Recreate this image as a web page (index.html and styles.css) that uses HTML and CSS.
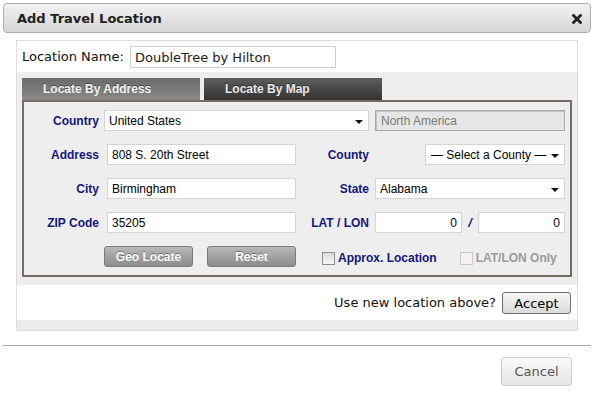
FILE: index.html
```html
<!DOCTYPE html>
<html>
<head>
<meta charset="utf-8">
<link rel="stylesheet" href="styles.css">
</head>
<body>
<div class="dialog">
  <div class="titlebar">
    <span class="title">Add Travel Location</span>
    <svg class="close" width="10" height="10" viewBox="0 0 10 10"><path d="M1.5 1.5 L8.5 8.5 M8.5 1.5 L1.5 8.5" stroke="#222" stroke-width="2.8" stroke-linecap="square"/></svg>
  </div>
  <div class="content">
    <div class="panel">
      <div class="name-row">
        <span class="name-label">Location Name:</span>
        <input class="name-input" type="text" value="DoubleTree by Hilton">
      </div>
      <div class="gray">
        <div class="tabs">
          <div class="tab active">Locate By Address</div>
          <div class="tab">Locate By Map</div>
        </div>
        <div class="tabbox">
          <div class="grid">
            <span class="lbl">Country</span>
            <div class="select country-select"><span>United States</span><i class="arrow"></i></div>
            <input class="field region" type="text" value="North America" disabled>

            <span class="lbl">Address</span>
            <input class="field text-in" type="text" value="808 S. 20th Street">
            <span class="lbl lbl2">County</span>
            <div class="county-cell"><div class="select county-select"><span>— Select a County —</span><i class="arrow"></i></div></div>

            <span class="lbl">City</span>
            <input class="field text-in" type="text" value="Birmingham">
            <span class="lbl lbl2">State</span>
            <div class="select state-select"><span>Alabama</span><i class="arrow"></i></div>

            <span class="lbl">ZIP Code</span>
            <input class="field text-in" type="text" value="35205">
            <span class="lbl lbl2">LAT / LON</span>
            <div class="latlon">
              <input class="field num" type="text" value="0">
              <span class="slash">/</span>
              <input class="field num lon" type="text" value="0">
            </div>

            <span></span>
            <div class="btns">
              <button class="gbtn">Geo Locate</button>
              <button class="gbtn reset">Reset</button>
            </div>
            <div class="checks">
              <label class="chk"><span class="box"></span>Approx. Location</label>
              <label class="chk disabled"><span class="box"></span>LAT/LON Only</label>
            </div>
          </div>
        </div>
      </div>
      <div class="accept-row">
        <span class="question">Use new location above?</span>
        <button class="accept">Accept</button>
      </div>
      <div class="band"></div>
    </div>
  </div>
  <div class="footer">
    <button class="cancel">Cancel</button>
  </div>
</div>
</body>
</html>
```

FILE: styles.css
```css
* { box-sizing: border-box; }
html, body { margin: 0; padding: 0; background: #fff; }
body { width: 594px; height: 403px; overflow: hidden; font-family: "Liberation Sans", Arial, sans-serif; }

.dialog { padding: 3px; }

.titlebar {
  height: 30px;
  border: 1px solid #adadad;
  border-radius: 4px;
  background: linear-gradient(#f2f2f2, #d6d6d6);
  display: flex;
  align-items: center;
  justify-content: space-between;
  padding: 0 8px 0 13px;
}
.title {
  font-family: "DejaVu Sans", Verdana, sans-serif;
  font-weight: bold;
  font-size: 13px;
  color: #222;
}
.close { display: block; margin-top: 1px; }

.content { padding: 7px 13px 0 13px; }

.panel {
  border: 1px solid #dcdcdc;
  background: #fff;
}

.name-row {
  height: 31px;
  display: flex;
  align-items: flex-start;
  padding: 5px 0 0 5px;
}
.name-label {
  font-family: "DejaVu Sans", Verdana, sans-serif;
  font-size: 13px;
  color: #111;
  line-height: 22px;
  width: 108px;
}
.name-input {
  width: 206px;
  height: 22px;
  border: 1px solid #cfcfcf;
  font-family: "DejaVu Sans", Verdana, sans-serif;
  font-size: 13px;
  color: #222;
  padding: 0 4px;
  margin: 0;
  outline: none;
}

.gray {
  background: #eeeeee;
  padding: 6px 5px 8px 5px;
}

.tabs { display: flex; gap: 4px; height: 22px; }
.tab {
  width: 178px;
  height: 22px;
  padding-left: 21px;
  font-weight: bold;
  font-size: 12px;
  line-height: 22px;
  color: #e8e8e8;
  background: linear-gradient(#5e5e5e, #333);
  text-shadow: 0 -1px 0 rgba(0,0,0,0.4);
}
.tab.active {
  background: linear-gradient(#6a6a6a, #8a8a8a);
  color: #f4f4f4;
}

.tabbox {
  border: 2px solid #766c62;
  background: #eeeeee;
  padding: 8px 0 8px 0;
}

.grid {
  display: grid;
  grid-template-columns: 80px 192px 79px 190px;
  grid-auto-rows: 21px;
  row-gap: 13px;
  align-items: center;
}

.lbl {
  font-weight: bold;
  font-size: 12px;
  color: #16167e;
  text-align: right;
  padding-right: 5px;
}
.lbl2 { padding-right: 6px; }

.field {
  height: 21px;
  border: 1px solid #d4d4d4;
  background: #fff;
  font-family: "Liberation Sans", Arial, sans-serif;
  font-size: 12px;
  color: #000;
  padding: 0 4px;
  margin: 0;
  outline: none;
}
.text-in { width: 189px; margin-left: 3px; }

.region {
  grid-column: 4;
  width: 190px;
  background: #e6e6e6;
  border: 1px solid #a8a8a8;
  box-shadow: inset 1px 1px 0 #c4c4c4;
  color: #7a7a7a;
  padding-left: 5px;
}

.select {
  height: 21px;
  border: 1px solid #d4d4d4;
  background: #fff;
  display: flex;
  align-items: center;
  justify-content: space-between;
  font-size: 12px;
  color: #000;
  padding: 0 5px 0 4px;
}
.country-select { grid-column: 2 / span 2; width: 265px; }
.state-select { width: 190px; }
.county-cell { display: flex; justify-content: flex-end; }
.county-select { width: 140px; padding-left: 5px; }
.arrow {
  width: 0; height: 0;
  border-left: 4px solid transparent;
  border-right: 4px solid transparent;
  border-top: 4px solid #111;
  margin-top: 2px;
}

.latlon { display: flex; align-items: center; }
.num { width: 87px; text-align: right; padding-right: 4px; }
.slash {
  width: 16px;
  text-align: center;
  font-weight: bold;
  font-size: 13px;
  color: #16167e;
  font-style: italic;
}

.btns { display: flex; gap: 14px; }
.gbtn {
  width: 89px;
  height: 21px;
  margin: 0;
  padding: 0;
  border: 1px solid #7c7c7c;
  border-radius: 3px;
  background: linear-gradient(#b8b8b8, #8c8c8c);
  color: #fff;
  font-family: "Liberation Sans", Arial, sans-serif;
  font-weight: bold;
  font-size: 12px;
  text-shadow: 0 -1px 0 rgba(0,0,0,0.35);
}

.checks {
  grid-column: 3 / span 2;
  display: flex;
  align-items: center;
  padding-left: 26px;
}
.chk {
  display: flex;
  align-items: center;
  font-weight: bold;
  font-size: 12px;
  color: #16167e;
  margin-top: 3px;
}
.chk .box {
  width: 13px;
  height: 13px;
  border: 1px solid #8f8f8f;
  background: linear-gradient(#dcdcdc, #f6f6f6);
  margin-right: 3px;
}
.chk.disabled { color: #9a9a9a; margin-left: 23px; }
.chk.disabled .box { border-color: #c8c8c8; background: #f2f2f2; }

.accept-row {
  height: 35px;
  display: flex;
  align-items: flex-start;
  justify-content: flex-end;
  padding: 7px 6px 0 0;
  gap: 6px;
}
.question {
  font-family: "DejaVu Sans", Verdana, sans-serif;
  font-size: 13px;
  color: #111;
  line-height: 22px;
}
.accept {
  width: 69px;
  height: 22px;
  margin: 0;
  padding: 0;
  border: 1px solid #6e6e6e;
  border-radius: 3px;
  background: linear-gradient(#f7f7f7, #dadada);
  font-family: "DejaVu Sans", Verdana, sans-serif;
  font-size: 13px;
  color: #000;
}

.band { height: 10px; background: #ececec; }

.footer {
  margin-top: 14px;
  border-top: 1px solid #a8a8a8;
  padding: 11px 19px 0 0;
  display: flex;
  justify-content: flex-end;
}
.cancel {
  width: 71px;
  height: 29px;
  margin: 0;
  padding: 0;
  border: 1px solid #cdcdcd;
  border-radius: 3px;
  background: linear-gradient(#fbfbfb, #e4e4e4);
  font-family: "DejaVu Sans", Verdana, sans-serif;
  font-size: 13px;
  color: #555;
}
```
